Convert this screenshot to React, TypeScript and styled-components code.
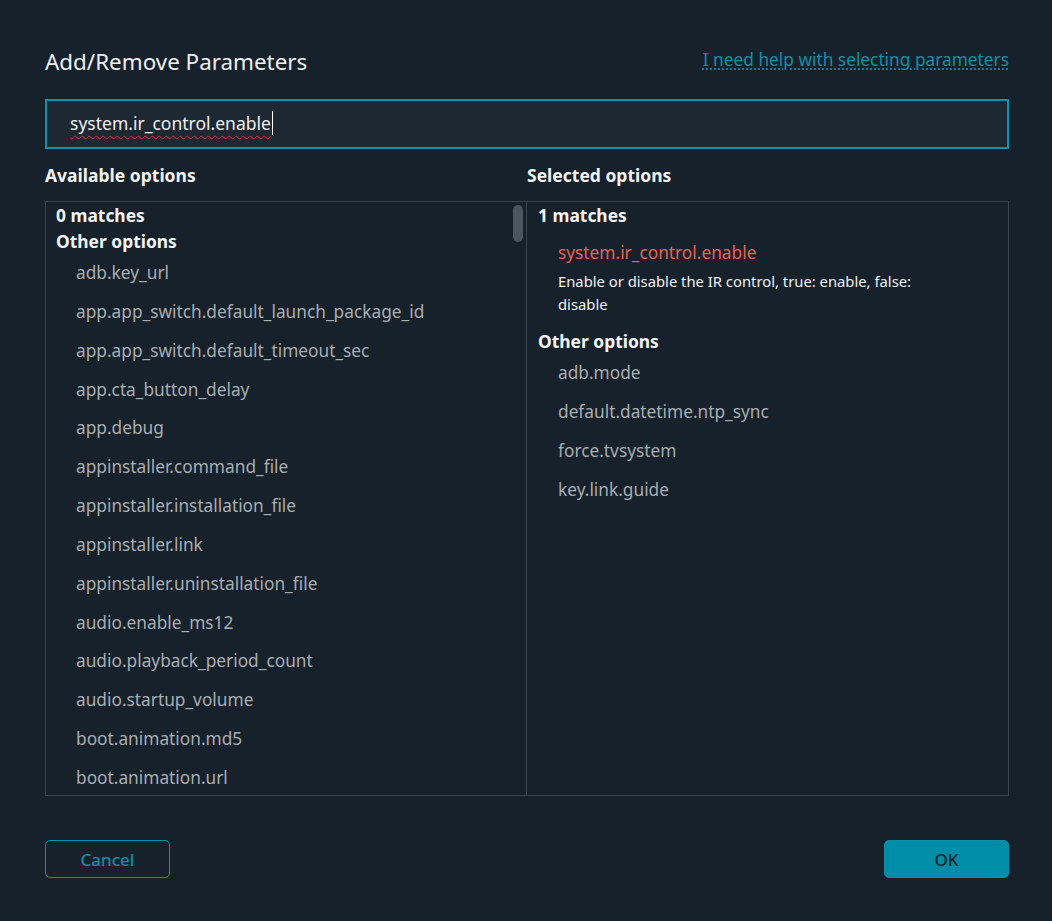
import React from 'react';
import styled, { createGlobalStyle } from 'styled-components';

const GlobalStyle = createGlobalStyle`
  html, body {
    margin: 0;
    padding: 0;
    background: #17212b;
  }
  body {
    font-family: "Noto Sans", "Open Sans", sans-serif;
    color: #eef0f2;
  }
`;

const Dialog = styled.div`
  width: 1052px;
  height: 921px;
  box-sizing: border-box;
  padding: 47px 43px 0 45px;
  background: #17212b;
  display: flex;
  flex-direction: column;
`;

const HeaderRow = styled.div`
  display: flex;
  justify-content: space-between;
  align-items: center;
  height: 30px;
`;

const Title = styled.h1`
  margin: 0;
  font-size: 22.4px;
  line-height: 30px;
  font-weight: 400;
  color: #eef0f2;
`;

const HelpLink = styled.a`
  font-size: 17.3px;
  line-height: 24px;
  color: #118fa8;
  text-decoration: underline dotted;
  text-underline-offset: 3px;
  margin-bottom: 5px;
  cursor: pointer;
`;

const SearchField = styled.div`
  margin-top: 22px;
  height: 50px;
  box-sizing: border-box;
  border: 2px solid #0f93ab;
  background: #1d2832;
  display: flex;
  align-items: center;
  padding: 0 0 2px 23px;
  cursor: text;
`;

const QueryText = styled.span`
  font-size: 17.5px;
  line-height: 24px;
  color: #eef0f2;
  text-decoration: underline wavy #d8322c;
  text-decoration-thickness: 1px;
  text-underline-offset: 5px;
`;

const Caret = styled.span`
  width: 1px;
  height: 24px;
  margin-left: 1px;
  background: #ffffff;
`;

const Columns = styled.div`
  display: grid;
  grid-template-columns: 482px 1fr;
`;

const ColumnHeaders = styled(Columns)`
  margin-top: 14px;
  height: 24px;
`;

const ColumnTitle = styled.div`
  font-size: 17.5px;
  line-height: 24px;
  font-weight: 700;
  color: #f2f4f5;
`;

const Panel = styled.div`
  margin-top: 14px;
  height: 595px;
  box-sizing: border-box;
  border: 1px solid #39444e;
  display: grid;
  grid-template-columns: 481px 1fr;
  overflow: hidden;
`;

const ListColumn = styled.div<{ $divider?: boolean }>`
  position: relative;
  box-sizing: border-box;
  padding: 0 0 0 ${({ $divider }) => ($divider ? '10px' : '11px')};
  border-right: ${({ $divider }) => ($divider ? '1px solid #39444e' : 'none')};
  overflow: hidden;
  height: 593px;
`;

const ScrollThumb = styled.div`
  position: absolute;
  top: 3px;
  right: 3px;
  width: 10px;
  height: 37px;
  border-radius: 5px;
  background: #4b555e;
`;

const GroupLabel = styled.div`
  font-size: 17.4px;
  line-height: 26px;
  font-weight: 700;
  color: #f2f4f5;
`;

const Item = styled.div`
  padding-left: 20px;
  font-size: 17.3px;
  line-height: 38.85px;
  color: #a8adb2;
  white-space: nowrap;
  cursor: pointer;
`;

const SelectedItem = styled.div`
  padding: 11px 0 12px 20px;
`;

const SelectedName = styled.div`
  font-size: 17.3px;
  line-height: 28px;
  color: #e8614d;
`;

const Description = styled.div`
  margin-top: 3px;
  max-width: 385px;
  font-size: 14.8px;
  line-height: 23px;
  color: #eef0f2;
`;

const Footer = styled.div`
  margin-top: 44px;
  display: flex;
  justify-content: space-between;
`;

const Button = styled.button<{ $primary?: boolean }>`
  width: 125px;
  height: 38px;
  box-sizing: border-box;
  border-radius: 5px;
  font-family: inherit;
  font-size: 17px;
  font-weight: 500;
  cursor: pointer;
  border: 1.5px solid #0f8ea6;
  background: ${({ $primary }) => ($primary ? '#008da7' : 'transparent')};
  color: ${({ $primary }) => ($primary ? '#10232d' : '#0f8ea6')};
`;

const availableOptions = [
  'adb.key_url',
  'app.app_switch.default_launch_package_id',
  'app.app_switch.default_timeout_sec',
  'app.cta_button_delay',
  'app.debug',
  'appinstaller.command_file',
  'appinstaller.installation_file',
  'appinstaller.link',
  'appinstaller.uninstallation_file',
  'audio.enable_ms12',
  'audio.playback_period_count',
  'audio.startup_volume',
  'boot.animation.md5',
  'boot.animation.url',
];

const otherSelected = [
  'adb.mode',
  'default.datetime.ntp_sync',
  'force.tvsystem',
  'key.link.guide',
];

export default function App() {
  const query = 'system.ir_control.enable';

  return (
    <>
      <GlobalStyle />
      <Dialog>
        <HeaderRow>
          <Title>Add/Remove Parameters</Title>
          <HelpLink>I need help with selecting parameters</HelpLink>
        </HeaderRow>

        <SearchField role="textbox">
          <QueryText>{query}</QueryText>
          <Caret />
        </SearchField>

        <ColumnHeaders>
          <ColumnTitle>Available options</ColumnTitle>
          <ColumnTitle>Selected options</ColumnTitle>
        </ColumnHeaders>

        <Panel>
          <ListColumn $divider>
            <GroupLabel>0 matches</GroupLabel>
            <GroupLabel>Other options</GroupLabel>
            {availableOptions.map((name) => (
              <Item key={name}>{name}</Item>
            ))}
            <ScrollThumb />
          </ListColumn>

          <ListColumn>
            <GroupLabel>1 matches</GroupLabel>
            <SelectedItem>
              <SelectedName>system.ir_control.enable</SelectedName>
              <Description>
                Enable or disable the IR control, true: enable, false: disable
              </Description>
            </SelectedItem>
            <GroupLabel>Other options</GroupLabel>
            {otherSelected.map((name) => (
              <Item key={name}>{name}</Item>
            ))}
          </ListColumn>
        </Panel>

        <Footer>
          <Button>Cancel</Button>
          <Button $primary>OK</Button>
        </Footer>
      </Dialog>
    </>
  );
}
